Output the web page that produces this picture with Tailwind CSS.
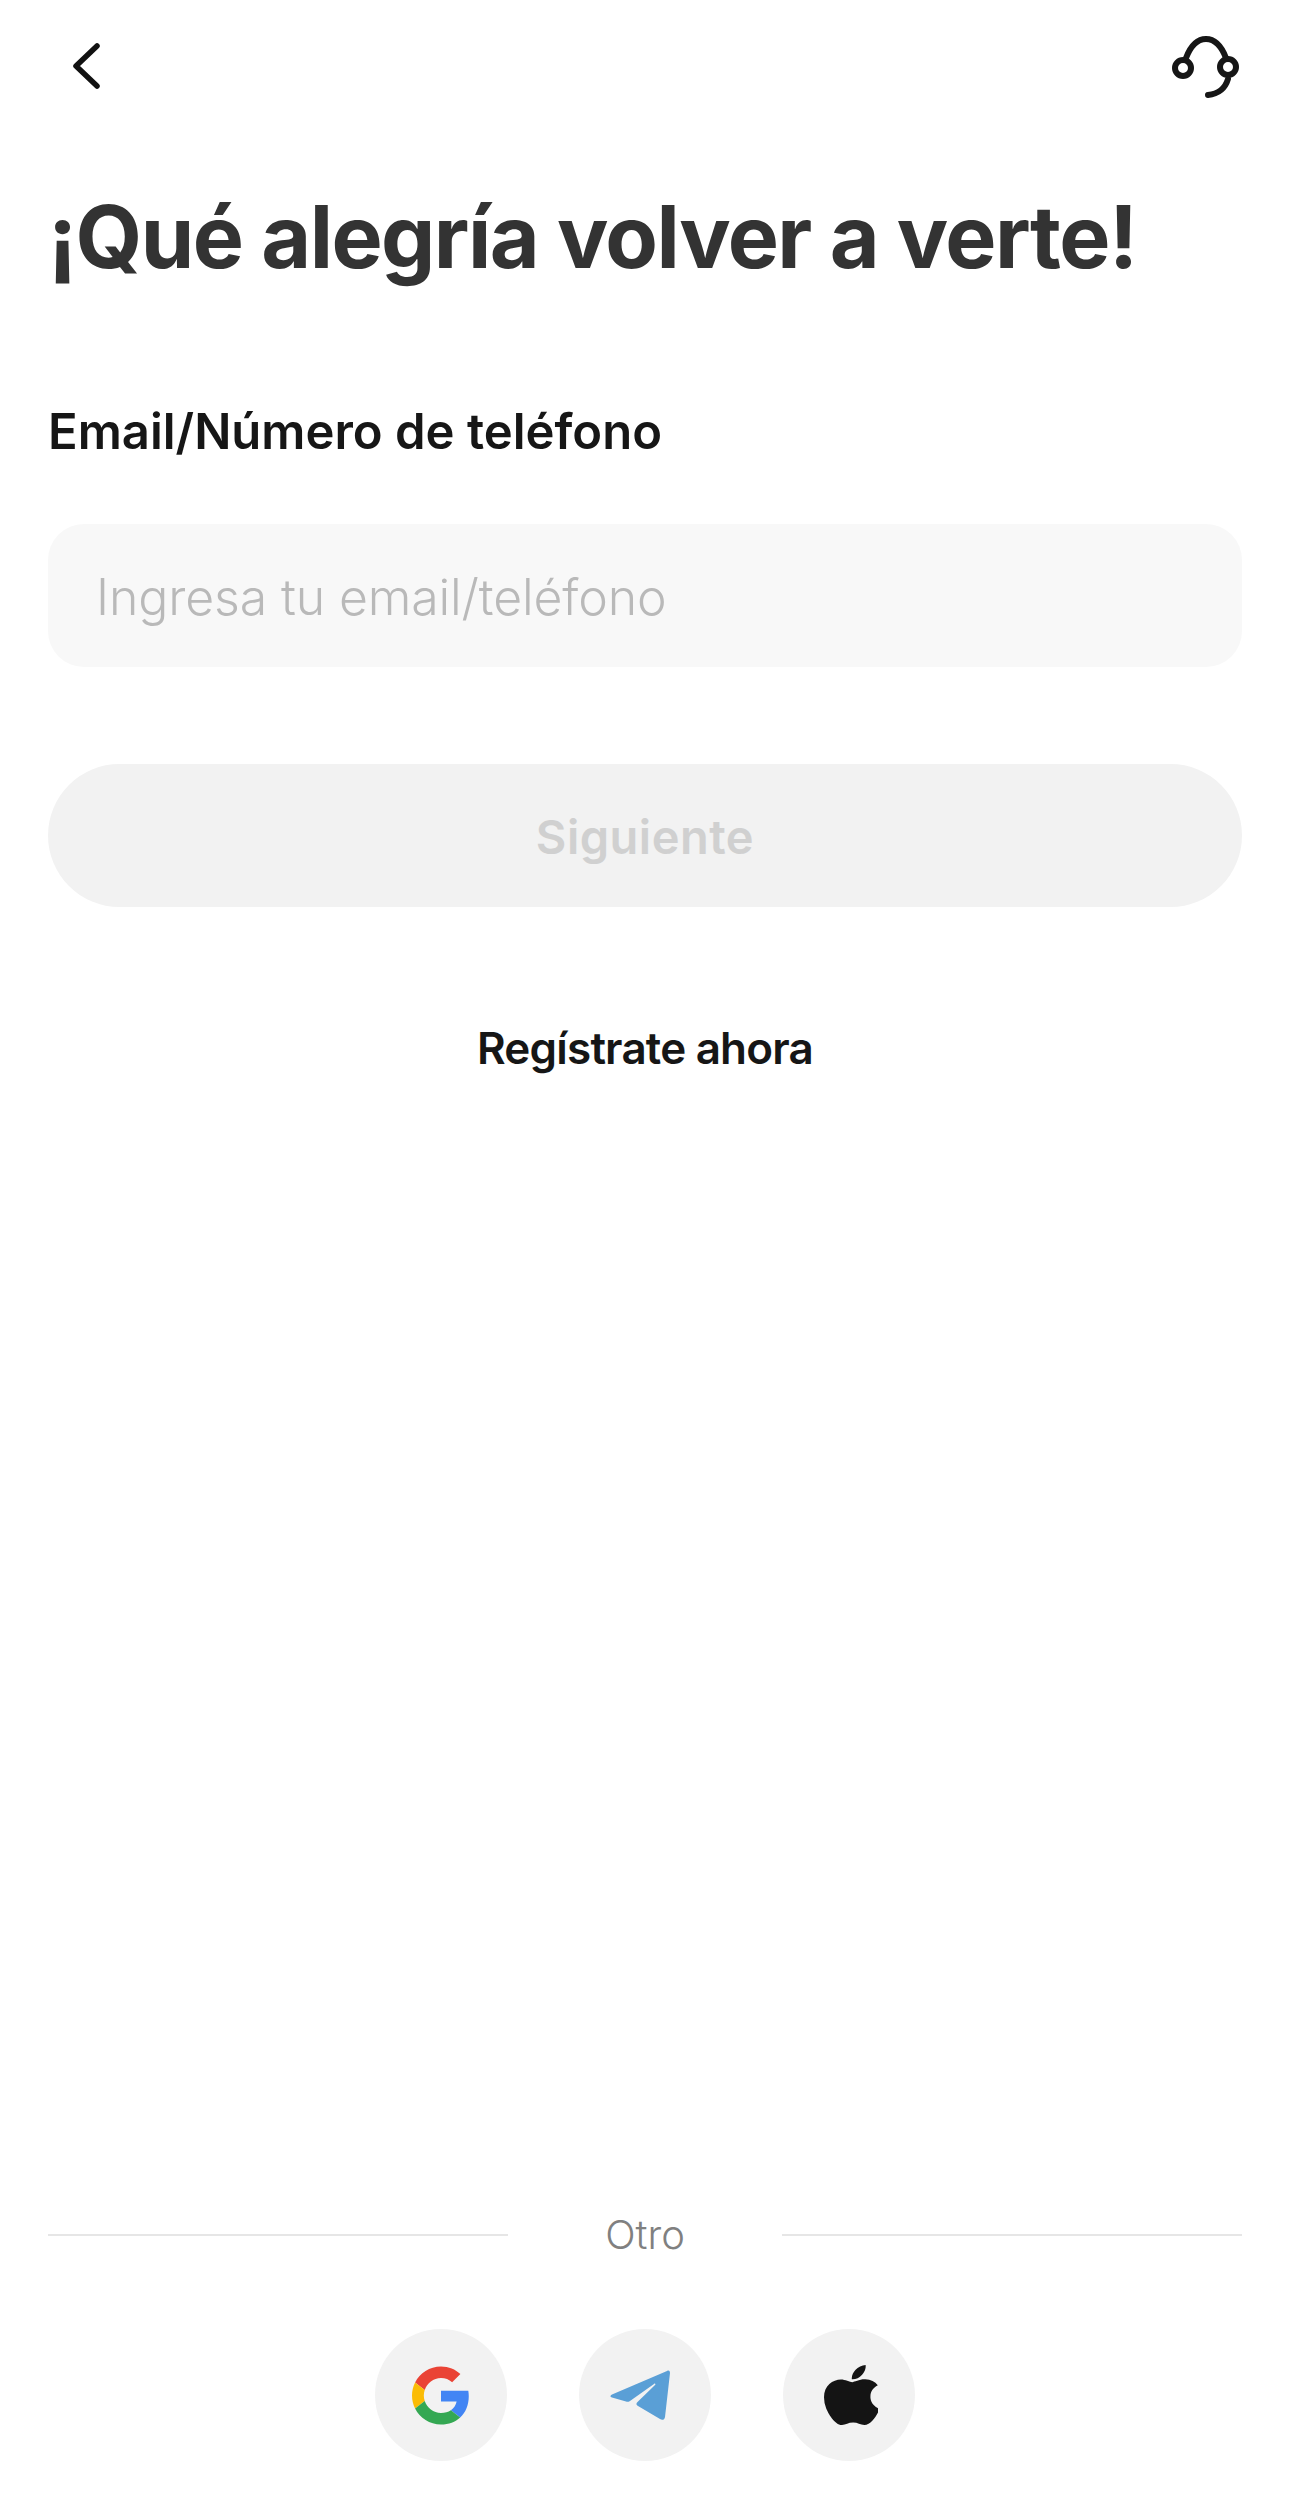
<!DOCTYPE html>
<html lang="es">
<head>
<meta charset="utf-8">
<script src="https://cdn.jsdelivr.net/npm/@tailwindcss/browser@4"></script>
</head>
<body class="bg-white">
<main class="w-[1290px] h-[2499px] px-[48px] flex flex-col font-['Inter',sans-serif] overflow-hidden">
  <header class="h-[132px] flex items-center justify-between shrink-0">
    <svg class="ml-[20px] w-[36px] h-[50px]" viewBox="0 0 36 50" fill="none" stroke="#111" stroke-width="5.5" stroke-linecap="round" stroke-linejoin="round"><path d="M29 5 L8 25 L29 45"/></svg>
    <svg class="mr-[-2px] w-[74px] h-[66px]" viewBox="1170 32 74 66" fill="none" stroke="#161616" stroke-width="6" stroke-linecap="round"><circle cx="1183" cy="67" r="8"/><circle cx="1228" cy="66" r="8"/><path d="M1186 57 C1191 44 1198 38 1206 38 C1214 38 1221 44 1226 57"/><path d="M1228 78 C1225 88 1218 93 1208 94"/></svg>
  </header>
  <h1 class="mt-[55px] text-[86px] leading-[100px] font-bold tracking-[-1.55px] text-[#333] whitespace-nowrap">¡Qué alegría volver a verte!</h1>
  <label class="mt-[115px] text-[49px] leading-[60px] font-semibold text-[#161616]">Email/Número de teléfono</label>
  <div class="mt-[62px] h-[143px] rounded-[36px] bg-[#f8f8f8] flex items-center px-[48px] pt-[4px] text-[50px] font-light tracking-[-0.15px] text-[#b9b9b9]">Ingresa tu email/teléfono</div>
  <button class="mt-[97px] h-[143px] rounded-[72px] bg-[#f2f2f2] pt-[4px] text-[47px] font-semibold tracking-[0.5px] text-[#d0d0d0]">Siguiente</button>
  <a class="mt-[113px] text-center text-[44px] leading-[56px] font-semibold tracking-[-0.8px] text-[#161616]">Regístrate ahora</a>
  <div class="mt-auto flex items-center justify-between h-[60px]">
    <div class="w-[460px] h-[2px] bg-[#e6e6e6]"></div>
    <span class="text-[40px] font-light text-[#808080]">Otro</span>
    <div class="w-[460px] h-[2px] bg-[#e6e6e6]"></div>
  </div>
  <div class="mt-[64px] mb-[38px] flex justify-center gap-[72px]">
    <div class="w-[132px] h-[132px] rounded-full bg-[#f2f2f2] flex items-center justify-center">
      <svg class="w-[58px] h-[59px]" viewBox="0 0 48 48"><path fill="#4285F4" d="M46.98 24.55c0-1.57-.15-3.09-.38-4.55H24v9.02h12.94c-.58 2.96-2.26 5.48-4.78 7.18l7.73 6c4.51-4.18 7.09-10.36 7.09-17.65z"/><path fill="#EA4335" d="M24 9.5c3.54 0 6.71 1.22 9.21 3.6l6.85-6.85C35.9 2.38 30.47 0 24 0 14.62 0 6.51 5.38 2.56 13.22l7.98 6.19C12.43 13.72 17.74 9.5 24 9.5z"/><path fill="#FBBC05" d="M10.53 28.59c-.48-1.45-.76-2.99-.76-4.59s.27-3.14.76-4.59l-7.98-6.19C.92 16.46 0 20.12 0 24c0 3.88.92 7.54 2.56 10.78l7.97-6.19z"/><path fill="#34A853" d="M24 48c6.48 0 11.93-2.13 15.89-5.81l-7.73-6c-2.15 1.45-4.92 2.3-8.16 2.3-6.26 0-11.57-4.22-13.47-9.91l-7.98 6.19C6.51 42.62 14.62 48 24 48z"/></svg>
    </div>
    <div class="w-[132px] h-[132px] rounded-full bg-[#f2f2f2] flex items-center justify-center">
      <svg class="mr-[10px] w-[60px] h-[50px]" viewBox="0 0 60 50"><path fill="#5A9FD6" d="M57 1 C59 0 60 1 60 3 L55 47 C54.500 50 52 50.500 50 49 L28 36 C26 35 26 33.500 27.500 32 L45 15 C46 14 45 13 44 14 L20 31 C18.500 32 17 32 16 31.500 L2 27.500 C0 27 0 25.500 2 24.500 Z"/></svg>
    </div>
    <div class="w-[132px] h-[132px] rounded-full bg-[#f2f2f2] flex items-center justify-center">
      <svg class="ml-[3px] w-[54px] h-[60px]" viewBox="0 0 366 448" preserveAspectRatio="none"><path fill="#141414" transform="translate(-4 -32)" d="M318.700 268.700c-.2-36.700 16.400-64.400 50-84.800-18.800-26.900-47.200-41.700-84.700-44.600-35.500-2.800-74.300 20.700-88.500 20.700-15 0-49.400-19.700-76.400-19.700C63.300 141.200 4 184.800 4 273.500q0 39.300 14.400 81.200c12.800 36.700 59 126.700 107.200 125.200 25.200-.6 43-17.900 75.800-17.900 31.800 0 48.300 17.900 76.400 17.900 48.600-.7 90.400-82.500 102.600-119.300-65.200-30.700-61.700-90-61.700-91.900zm-56.600-164.200c27.300-32.400 24.800-61.900 24-72.500-24.100 1.400-52 16.400-67.900 34.900-17.500 19.800-27.800 44.300-25.600 71.900 26.100 2 49.900-11.400 69.500-34.300z"/></svg>
    </div>
  </div>
</main>
</body>
</html>
